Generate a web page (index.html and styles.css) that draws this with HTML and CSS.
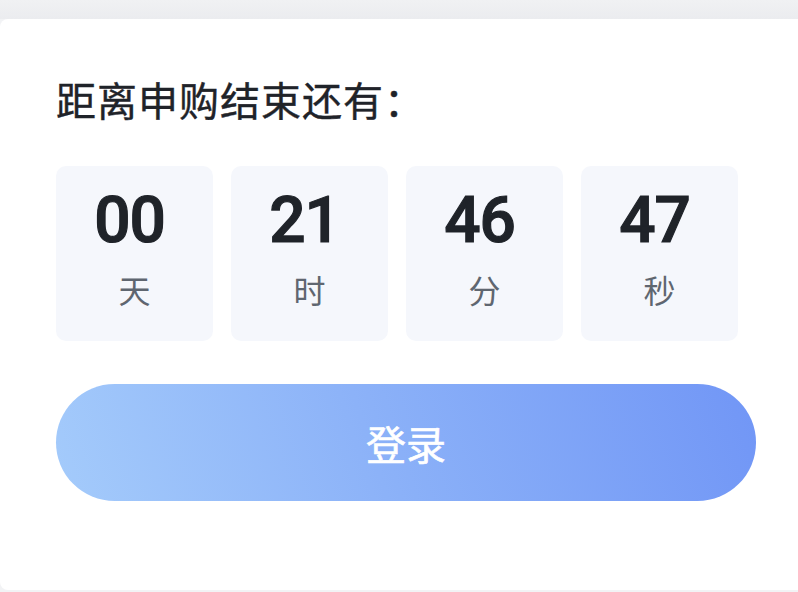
FILE: index.html
```html
<!DOCTYPE html>
<html lang="zh-CN">
<head>
  <meta charset="UTF-8">
  <title>申购倒计时</title>
  <link rel="stylesheet" href="styles.css">
</head>
<body>
  <div class="panel">
    <h2 class="panel-title">距离申购结束还有：</h2>
    <div class="countdown">
      <div class="count-box">
        <span class="count-num">00</span>
        <span class="count-unit">天</span>
      </div>
      <div class="count-box">
        <span class="count-num">21</span>
        <span class="count-unit">时</span>
      </div>
      <div class="count-box">
        <span class="count-num">46</span>
        <span class="count-unit">分</span>
      </div>
      <div class="count-box">
        <span class="count-num">47</span>
        <span class="count-unit">秒</span>
      </div>
    </div>
    <a href="#" class="login-btn">登录</a>
  </div>
</body>
</html>
```

FILE: styles.css
```css
html {
    overflow: hidden;
}

body {
    margin: 0;
    padding: 0;
    font-family: 'Noto Sans CJK SC', 'Noto Sans', sans-serif;
    background: linear-gradient(#f0f1f3, #ebecef 19px, #f2f3f5 19px);
    height: 592px;
}

.panel {
    background-color: #fff;
    margin: 19px -24px 0 0;
    height: 571px;
    box-sizing: border-box;
    padding: 60px 0 0 56px;
    border-radius: 8px;
}

.panel-title {
    margin: 0 0 47px;
    font-size: 40px;
    line-height: 40px;
    font-weight: 400;
    letter-spacing: 1px;
    color: #1f2329;
    -webkit-text-stroke: 0.4px #1f2329;
}

.countdown {
    display: flex;
    gap: 18px;
}

.count-box {
    width: 157px;
    height: 175px;
    box-sizing: border-box;
    padding-top: 23px;
    background-color: #f5f7fc;
    border-radius: 10px;
    display: flex;
    flex-direction: column;
    align-items: center;
}

.count-num {
    font-family: 'Roboto', sans-serif;
    font-weight: 500;
    font-size: 64px;
    line-height: 64px;
    letter-spacing: -1px;
    color: #1f2329;
    -webkit-text-stroke: 1.2px #1f2329;
    margin-right: 10px;
}

.count-unit {
    margin-top: 20px;
    font-size: 32px;
    line-height: 32px;
    color: #5f6670;
}

.login-btn {
    margin-top: 43px;
    width: 700px;
    height: 117px;
    border-radius: 59px;
    background: linear-gradient(72deg, #a4cbfb 0%, #8cb2f8 45%, #7196f6 100%);
    color: #fff;
    font-size: 40px;
    font-weight: 400;
    -webkit-text-stroke: 0.6px #fff;
    text-decoration: none;
    display: flex;
    justify-content: center;
    align-items: center;
}
```
